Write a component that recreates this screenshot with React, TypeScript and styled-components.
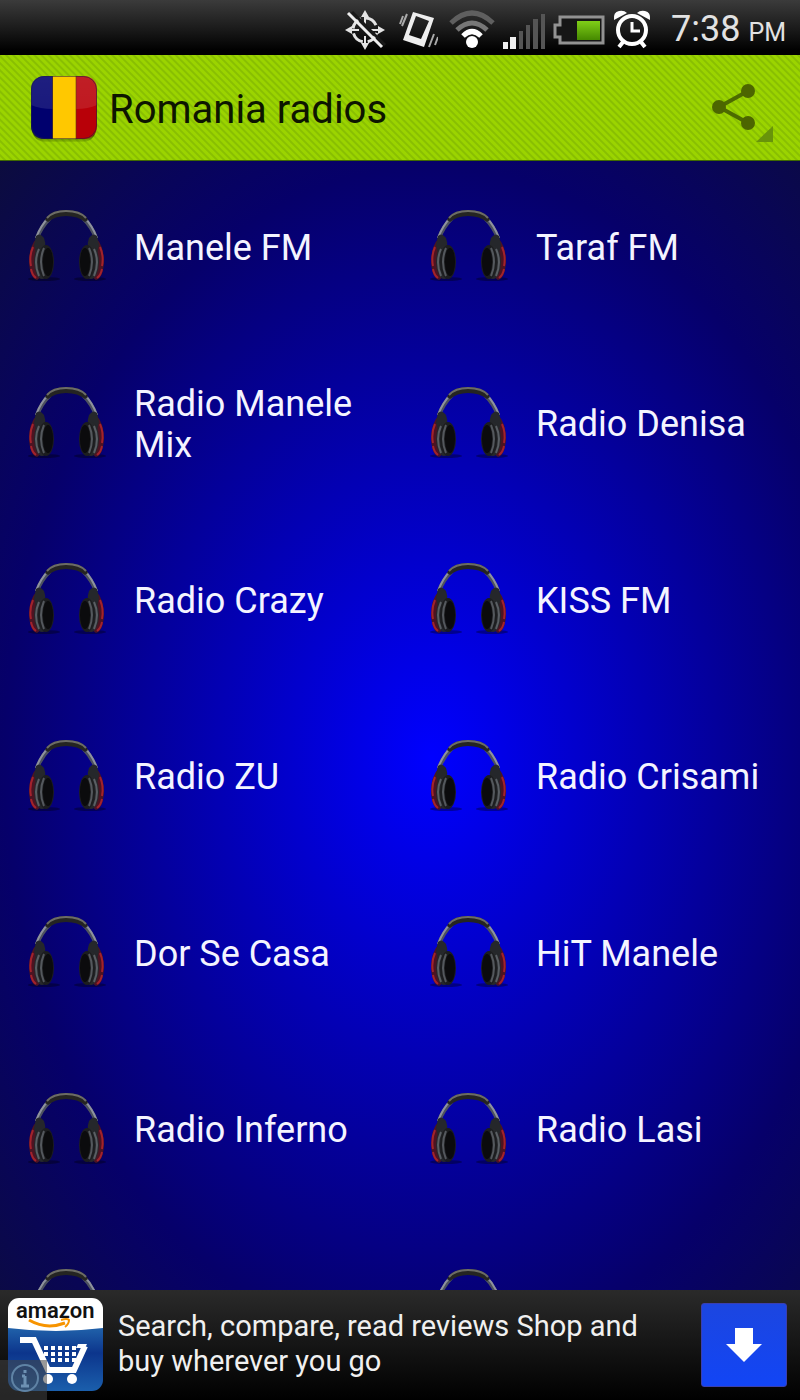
import React from 'react';
import styled, { createGlobalStyle } from 'styled-components';

const GlobalStyle = createGlobalStyle`
  * { box-sizing: border-box; }
  body { margin: 0; background: #000; font-family: Roboto, "Liberation Sans", sans-serif; }
  button { border: 0; padding: 0; background: none; font: inherit; color: inherit; cursor: pointer; }
`;

const Screen = styled.div`
  display: flex;
  flex-direction: column;
  height: 100vh;
  overflow: hidden;
`;

const StatusBar = styled.div`
  flex: none;
  display: flex;
  align-items: center;
  justify-content: flex-end;
  height: 55px;
  padding: 4px 14px 0 0;
  background: linear-gradient(#3b3b3b, #1c1c1c 50%, #000 92%);
  color: #e2e2e2;
`;

const StatusIcon = styled.svg<{ $gap?: number }>`
  display: block;
  flex: none;
  margin-right: ${(p) => p.$gap ?? 8}px;
`;

const Clock = styled.time`
  display: flex;
  align-items: baseline;
  gap: 8px;
  padding-top: 2px;
  font-size: 36px;
  line-height: 44px;
`;

const Meridiem = styled.span`
  font-size: 25px;
`;

const Header = styled.header`
  flex: none;
  display: flex;
  align-items: center;
  height: 106px;
  padding: 0 24px 0 28px;
  border-bottom: 1px solid #3f6a00;
  background: repeating-linear-gradient(45deg, #9bd400 0 2px, #89bf02 3px 4px, #9bd400 5px);
`;

const Title = styled.h1`
  flex: 1;
  margin: 0 0 0 9px;
  padding-top: 4px;
  font-size: 40px;
  line-height: 48px;
  font-weight: 400;
  color: #0d1500;
`;

const ShareButton = styled.button`
  display: block;
  svg { display: block; }
`;

const Stations = styled.main`
  flex: 1;
  min-height: 0;
  overflow-y: auto;
  scrollbar-width: none;
  background: radial-gradient(ellipse farthest-corner at 54% 53%, #0000ff, #06006a 70%, #0c0c3e);
`;

const StationGrid = styled.ul`
  display: grid;
  grid-template-columns: 1fr 1fr;
  grid-auto-rows: 80px 81px;
  gap: 96px 4px;
  margin: 0;
  padding: 46px 0 46px;
  list-style: none;
`;

const Station = styled.button`
  display: flex;
  align-items: center;
  gap: 26px;
  width: 100%;
  height: 100%;
  padding: 0 28px;
  text-align: left;
  font-size: 36px;
  line-height: 41px;
  color: #f4f4ff;
  svg { flex: none; display: block; }
`;

const StationName = styled.span`
  padding-top: 2px;
`;

const AdBanner = styled.aside`
  position: relative;
  flex: none;
  display: flex;
  align-items: center;
  height: 110px;
  padding: 0 13px 0 8px;
  background: linear-gradient(#2a2a2a, #000);
`;

const AdText = styled.p`
  flex: 1;
  margin: 0 50px 2px 14px;
  font-size: 29px;
  line-height: 35px;
  color: #f0f0f0;
`;

const DownloadButton = styled.button`
  display: flex;
  align-items: center;
  justify-content: center;
  flex: none;
  width: 86px;
  height: 84px;
  border: 1px solid #3a3fb0;
  border-radius: 3px;
  background: linear-gradient(#1c46e0, #1245f5);
`;

const AdInfo = styled.button`
  position: absolute;
  left: 0;
  bottom: 0;
  width: 47px;
  height: 40px;
  background: rgba(70, 70, 70, 0.55);
  svg { display: block; }
`;

const EarCup = () => (
  <>
    <path d="M8 32Q1 40 1 55Q2 71 9 73L13 70L10 42Z" fill="#4c1422" />
    <path d="M5 40Q1 49 3 59M3 62Q4 68 8 71" fill="none" stroke="#a3222c" strokeWidth="2" />
    <path d="M6 38L8 29Q12 25 16 31Q18 36 17 41L8 47Z" fill="#25272b" />
    <ellipse cx="14" cy="55" rx="8" ry="17" fill="#26282b" />
    <path d="M11 42Q5 55 11 69" fill="none" stroke="#5a5f64" strokeWidth="2" />
    <ellipse cx="18" cy="55" rx="8" ry="17" fill="#1c1d1f" />
    <path d="M16 41Q10 55 16 69" fill="none" stroke="#54585d" strokeWidth="2" />
    <ellipse cx="20" cy="55" rx="5" ry="14" fill="#0b0b0d" />
  </>
);

const Headphones = () => (
  <svg width="80" height="80" viewBox="0 0 80 80" aria-hidden="true">
    <ellipse cx="16" cy="72" rx="16" ry="2" fill="#000" opacity=".35" />
    <ellipse cx="62" cy="72" rx="16" ry="2" fill="#000" opacity=".35" />
    <path d="M9 31C12 23 16 17 22 11M68 31C65 23 61 17 55 11" fill="none" stroke="#4d525f" strokeWidth="4" />
    <path d="M8 31C11 23 15 16 21 10M69 31C66 23 62 16 56 10" fill="none" stroke="#8e929d" strokeWidth="2" />
    <path d="M17 13Q22 3 38 3Q55 3 60 13L57 15Q50 9 38 9Q27 9 20 15Z" fill="#242422" />
    <path d="M19 11Q25 4 38 4Q52 4 58 11" fill="none" stroke="#6c6c66" strokeWidth="2" />
    <EarCup />
    <g transform="translate(77 0) scale(-1 1)"><EarCup /></g>
  </svg>
);

const FlagIcon = () => (
  <svg width="72" height="72" viewBox="0 0 72 72" role="img" aria-label="Flag of Romania">
    <defs>
      <clipPath id="flag"><rect x="3" y="4" width="66" height="63" rx="13" /></clipPath>
      <linearGradient id="gloss" x1="0" y1="0" x2="0" y2="1">
        <stop offset="0" stopColor="#fff" stopOpacity=".12" />
        <stop offset="1" stopColor="#fff" stopOpacity=".1" />
      </linearGradient>
      <linearGradient id="flagShadow" x1="0" y1="0" x2="0" y2="1">
        <stop offset=".9" stopColor="#2c4500" stopOpacity=".8" />
        <stop offset="1" stopColor="#2c4500" stopOpacity=".1" />
      </linearGradient>
    </defs>
    <rect x="4" y="6" width="64" height="64" rx="13" fill="url(#flagShadow)" />
    <g clipPath="url(#flag)">
      <path fill="#00006e" d="M3 4h22v64H3z" />
      <path fill="#ffc800" d="M25 4h23v64H25z" />
      <path fill="#b80008" d="M48 4h22v64H48z" />
      <path fill="url(#gloss)" d="M3 4h22v33Q12 37 3 33zM48 4h21v29Q60 37 48 37z" />
      <path stroke="#5a3c10" strokeWidth="1" d="M24.500 4v64M48 4v64" opacity=".6" />
    </g>
    <rect x="3.500" y="4.500" width="65" height="62" rx="13" fill="none" stroke="#202040" opacity=".55" />
  </svg>
);

const ShareIcon = () => (
  <svg width="68" height="68" viewBox="0 0 68 68" aria-hidden="true">
    <path d="M40 17L11 33L40 49" fill="none" stroke="#4c6a00" strokeWidth="4" />
    <circle cx="40" cy="17" r="7" fill="#4c6500" />
    <circle cx="11" cy="33" r="7" fill="#4c6500" />
    <circle cx="40" cy="49" r="7" fill="#4c6500" />
    <path d="M65 52V68H48Z" fill="#68940a" />
  </svg>
);

const AmazonIcon = () => (
  <svg width="96" height="96" viewBox="0 0 96 96" role="img" aria-label="amazon">
    <defs>
      <linearGradient id="bag" x1="0" y1="0" x2="0" y2="1">
        <stop offset="0" stopColor="#2163ab" />
        <stop offset=".4" stopColor="#0c358c" />
        <stop offset="1" stopColor="#1b60ad" />
      </linearGradient>
      <clipPath id="card"><rect x="0" y="1" width="95" height="93" rx="11" /></clipPath>
    </defs>
    <g clipPath="url(#card)">
      <path fill="url(#bag)" d="M0 30h96v65H0z" />
      <path fill="#fff" d="M0 0h96v31Q48 37 0 31z" />
    </g>
    <text x="8" y="21" fontFamily="Roboto, sans-serif" fontWeight="600" fontSize="22" fill="#111">amazon</text>
    <path d="M21 23Q38 33 57 26" fill="none" stroke="#f79400" strokeWidth="3" />
    <path d="M53 23Q59 21 61 23Q61 27 57 30" fill="none" stroke="#f79400" strokeWidth="2" />
    <path d="M12 43H26L40 73H66L77 49" fill="none" stroke="#fff" strokeWidth="6" />
    <path d="M70 47H79L77 51H68Z" fill="#fff" />
    <g fill="#fff">
      {[0, 1, 2].map((r) => [0, 1, 2, 3, 4].map((c) => (
        c >= r - 1 ? <rect key={`${r}-${c}`} x={36 + c * 7} y={49 + r * 6} width="4" height="4" /> : null
      )))}
      <circle cx="40" cy="82" r="5" />
      <circle cx="64" cy="82" r="5" />
    </g>
  </svg>
);

const stations = [
  'Manele FM', 'Taraf FM', 'Radio Manele Mix', 'Radio Denisa', 'Radio Crazy', 'KISS FM', 'Radio ZU',
  'Radio Crisami', 'Dor Se Casa', 'HiT Manele', 'Radio Inferno', 'Radio Lasi', '', '',
];

export default function App() {
  return (
    <Screen>
      <GlobalStyle />
      <StatusBar>
        <StatusIcon width="42" height="42" viewBox="0 0 42 42" $gap={12}>
          <g fill="none" stroke="#e4e4e4" strokeWidth="3">
            <circle cx="21" cy="21" r="12" strokeDasharray="13 5" strokeDashoffset="-3" />
            <path d="M21 8V15M21 27V34M8 21H15M27 21H34" strokeWidth="2" />
          </g>
          <path d="M21 1L25 8H17ZM21 41L25 34H17ZM1 21L8 17V25ZM41 21L34 17V25Z" fill="#e4e4e4" />
          <path d="M8 3L41 36" stroke="#181818" strokeWidth="3" />
          <path d="M4 4L38 38" stroke="#eee" strokeWidth="3" />
        </StatusIcon>
        <StatusIcon width="40" height="42" viewBox="0 0 40 42" $gap={11}>
          <path fillRule="evenodd" fill="#eee" d="M15 3L36 9L26 38L5 31ZM18 7L11 26L23 30L31 12Z" />
          <path d="M9 5L4 17M5 7L2 15M36 25L31 38M40 28L37 36" stroke="#aaa" strokeWidth="2" fill="none" />
        </StatusIcon>
        <StatusIcon width="46" height="42" viewBox="0 0 46 42" $gap={7}>
          <path d="M2 14Q23-6 44 14" fill="none" stroke="#5f5f5f" strokeWidth="5" />
          <path d="M8 21Q23 7 38 21" fill="none" stroke="#777" strokeWidth="5" />
          <path d="M14 27Q23 18 32 27" fill="none" stroke="#fff" strokeWidth="5" />
          <circle cx="23" cy="33" r="6" fill="#fff" />
        </StatusIcon>
        <StatusIcon width="44" height="42" viewBox="0 0 44 42" $gap={6}>
          <path fill="#eee" d="M1 33h5v7H1zM8 28h6v12H8z" />
          <path fill="#555" d="M17 22h4v18h-4zM24 16h4v24h-4zM31 10h5v30h-5zM39 5h4v35h-4z" />
        </StatusIcon>
        <StatusIcon width="53" height="42" viewBox="0 0 53 42" $gap={8}>
          <defs>
            <linearGradient id="charge" x1="0" y1="0" x2="0" y2="1">
              <stop offset="0" stopColor="#80ce18" />
              <stop offset="1" stopColor="#458900" />
            </linearGradient>
          </defs>
          <path d="M8 8H51V34H8V28H3V16H8Z" fill="#161616" stroke="#929292" strokeWidth="3" />
          <path d="M25 12H48V31H25Z" fill="url(#charge)" />
        </StatusIcon>
        <StatusIcon width="38" height="42" viewBox="0 0 38 42" $gap={20}>
          <g fill="none" stroke="#fff">
            <circle cx="19" cy="21" r="14" strokeWidth="4" />
            <path d="M19 13V22H27" strokeWidth="3" />
            <path d="M10 33L6 38M28 33L32 38" strokeWidth="4" />
          </g>
          <path d="M1 11Q0 3 6 2Q11 1 14 4ZM37 11Q38 3 32 2Q27 1 24 4Z" fill="#fff" />
        </StatusIcon>
        <Clock>7:38<Meridiem>PM</Meridiem></Clock>
      </StatusBar>
      <Header>
        <FlagIcon />
        <Title>Romania radios</Title>
        <ShareButton aria-label="Share"><ShareIcon /></ShareButton>
      </Header>
      <Stations>
        <StationGrid>
          {stations.map((name, i) => (
            <li key={i}>
              <Station aria-label={name || 'Station'}>
                <Headphones />
                <StationName>{name}</StationName>
              </Station>
            </li>
          ))}
        </StationGrid>
      </Stations>
      <AdBanner>
        <AmazonIcon />
        <AdText>Search, compare, read reviews Shop and buy wherever you go</AdText>
        <DownloadButton aria-label="Download">
          <svg width="36" height="34" viewBox="0 0 36 34"><path d="M9 0H27V16H36L18 34L0 16H9Z" fill="#fff" /></svg>
        </DownloadButton>
        <AdInfo aria-label="Ad information">
          <svg width="47" height="40" viewBox="0 0 47 40">
            <circle cx="25" cy="18" r="13" fill="none" stroke="#5f83a5" strokeWidth="2" />
            <path d="M25 16V26M22 16H25M21 26H29M25 10V13" stroke="#6d91b3" strokeWidth="3" />
          </svg>
        </AdInfo>
      </AdBanner>
    </Screen>
  );
}
